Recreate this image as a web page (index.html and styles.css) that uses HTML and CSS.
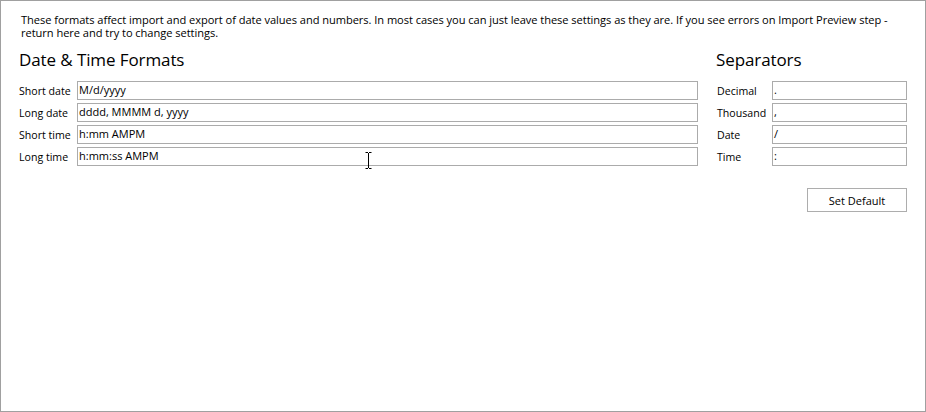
FILE: index.html
```html
<!DOCTYPE html>
<html lang="en">

<head>
    <meta charset="UTF-8">
    <title>Formats</title>
    <link rel="stylesheet" href="styles.css">
</head>

<body>
    <div class="window">
        <p class="intro">These formats affect import and export of date values and numbers. In most cases you can just leave these settings as they are. If you see errors on Import Preview step -
            return here and try to change settings.</p>

        <div class="columns">
            <div class="group formats">
                <h2>Date &amp; Time Formats</h2>
                <div class="fields">
                    <label>Short date</label>
                    <div class="box">M/d/yyyy</div>
                    <label>Long date</label>
                    <div class="box">dddd, MMMM d, yyyy</div>
                    <label>Short time</label>
                    <div class="box">h:mm AMPM</div>
                    <label>Long time</label>
                    <div class="box">h:mm:ss AMPM</div>
                </div>
            </div>

            <div class="group separators">
                <h2>Separators</h2>
                <div class="fields">
                    <label>Decimal</label>
                    <div class="box">.</div>
                    <label>Thousand</label>
                    <div class="box">,</div>
                    <label>Date</label>
                    <div class="box">/</div>
                    <label>Time</label>
                    <div class="box">:</div>
                </div>
                <div class="actions">
                    <button class="btn">Set Default</button>
                </div>
            </div>
        </div>

        <svg class="ibeam" width="7" height="17" viewBox="0 0 7 17">
            <path d="M0.5 0.5h2.5M4 0.5h2.5M3.5 1v15M0.5 16.5h2.5M4 16.5h2.5" stroke="#000" stroke-width="1" fill="none" />
        </svg>
    </div>
</body>

</html>
```

FILE: styles.css
```css
body {
    margin: 0;
    font-family: "Open Sans", "Noto Sans", sans-serif;
    color: #000;
    background: #fff;
}

.window {
    position: relative;
    width: 926px;
    height: 412px;
    box-sizing: border-box;
    border: 1px solid #a0a0a0;
    padding: 13px 18px 0 18px;
}

.intro {
    margin: 0 0 0 2px;
    font-size: 11.1px;
    line-height: 12.7px;
    letter-spacing: -0.05px;
}

.columns {
    display: flex;
    gap: 19px;
    margin-top: 10px;
}

.group h2 {
    margin: 0;
    font-weight: normal;
    font-size: 17px;
    line-height: 22px;
    height: 32px;
    letter-spacing: -0.1px;
}

.formats {
    width: 679px;
}

.separators {
    width: 190px;
}

.separators h2 {
    margin-left: -1px;
}

.fields {
    display: grid;
    grid-template-columns: 58px 1fr;
    row-gap: 3px;
    align-items: center;
}

.separators .fields {
    grid-template-columns: 55px 1fr;
}

.fields label {
    font-size: 10.6px;
    white-space: nowrap;
}

.separators .fields label {
    font-weight: 500;
    font-size: 10.6px;
}

.box {
    height: 19px;
    box-sizing: border-box;
    border: 1px solid #ababab;
    font-size: 11px;
    line-height: 16px;
    padding-left: 1px;
}

.actions {
    display: flex;
    justify-content: flex-end;
    margin-top: 22px;
}

.btn {
    width: 100px;
    height: 24px;
    background: #fff;
    border: 1px solid #adadad;
    font-family: inherit;
    font-size: 11px;
    padding: 0;
    color: #000;
}

.ibeam {
    position: absolute;
    left: 364px;
    top: 151px;
}
```
